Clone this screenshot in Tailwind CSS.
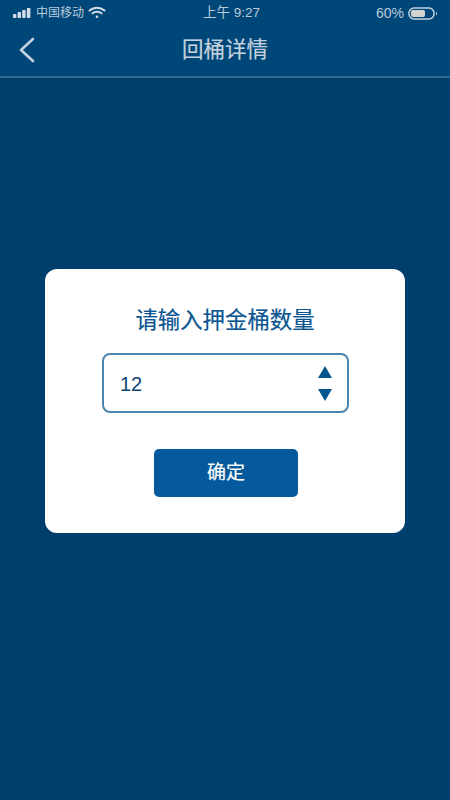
<!DOCTYPE html>
<html lang="zh">
  <head>
    <meta charset="UTF-8" />
    <meta name="viewport" content="width=device-width, initial-scale=1.0" />
    <title>回桶详情</title>
    <script src="https://cdn.jsdelivr.net/npm/@tailwindcss/browser@4"></script>
  </head>
  <body class="w-[450px] h-[800px] overflow-hidden bg-[#003e6d] font-['Liberation_Sans','Noto_Sans_CJK_SC',sans-serif]">
    <!-- top bars -->
    <div class="h-[78px] bg-[#004779] border-b-2 border-[#34698f]">
      <div class="h-[26px] pl-[13px] pr-[12px] flex items-center justify-between text-[13px] text-[#b9cad8]">
        <div class="flex-1 flex items-center">
          <svg width="18" height="10" viewBox="0 0 18 10" fill="#d3dee7">
            <rect x="0" y="6" width="3.4" height="4" rx="0.8" />
            <rect x="4.6" y="4" width="3.4" height="6" rx="0.8" />
            <rect x="9.2" y="2" width="3.4" height="8" rx="0.8" />
            <rect x="13.8" y="0" width="3.6" height="10" rx="0.8" />
          </svg>
          <span class="ml-[5px] text-[12px]">中国移动</span>
          <svg class="ml-[4px] -mt-[2px]" width="18" height="13" viewBox="0 0 18 13" fill="none" stroke="#d3dee7" stroke-width="2" stroke-linecap="round">
            <path d="M1.5 4.5C5.8 0.8 12.2 0.8 16.5 4.5" />
            <path d="M4.5 7.3C7 5.2 11 5.2 13.5 7.3" />
            <circle cx="9" cy="10.8" r="1.3" fill="#d3dee7" stroke="none" />
          </svg>
        </div>
        <span class="ml-[12px] text-[13.5px]">上午 9:27</span>
        <div class="flex-1 flex items-center justify-end">
          <span class="text-[14px]">60%</span>
          <svg class="ml-[4px]" width="30" height="13" viewBox="0 0 30 13" fill="none">
            <rect x="1" y="1" width="25" height="11" rx="5" stroke="#c6d4df" stroke-width="1.5" />
            <rect x="3" y="3" width="14" height="7" rx="2" fill="#d5d3cd" />
            <path d="M28 4.5C29.3 5.5 29.3 7.5 28 8.5Z" fill="#c6d4df" />
          </svg>
        </div>
      </div>
      <div class="relative h-[50px] flex items-center justify-center">
        <svg class="absolute left-[18px] top-[10px]" width="18" height="28" viewBox="0 0 18 28" fill="none" stroke="#c3d2de" stroke-width="2.6" stroke-linecap="round" stroke-linejoin="round">
          <path d="M15 3L3 14L15 25" />
        </svg>
        <h1 class="text-[21.5px] [-webkit-text-stroke:0.2px] text-[#c3d2de] -mt-[2px]">回桶详情</h1>
      </div>
    </div>

    <!-- dialog -->
    <div class="mt-[191px] mx-[45px] h-[264px] bg-white rounded-[12px] flex flex-col items-center">
      <p class="mt-[37px] text-[22.4px] [-webkit-text-stroke:0.2px] leading-[30px] text-[#0a5490]">请输入押金桶数量</p>
      <div class="mt-[17px] ml-[1px] w-[247px] h-[60px] border-2 border-[#4a86b2] rounded-[8px] flex items-center justify-between pl-[16px] pr-[15px]">
        <span class="pt-[1px] text-[20px] text-[#0b4476]">12</span>
        <div class="flex flex-col gap-[11px]">
          <svg width="14" height="12" viewBox="0 0 14 12" fill="#04568f"><path d="M7 0L14 12H0Z" /></svg>
          <svg width="14" height="12" viewBox="0 0 14 12" fill="#04568f"><path d="M0 0H14L7 12Z" /></svg>
        </div>
      </div>
      <button class="mt-[36px] ml-[2px] w-[144px] h-[48px] bg-[#045a9c] rounded-[5px] text-[19px] [-webkit-text-stroke:0.2px] text-white">确定</button>
    </div>
  </body>
</html>
